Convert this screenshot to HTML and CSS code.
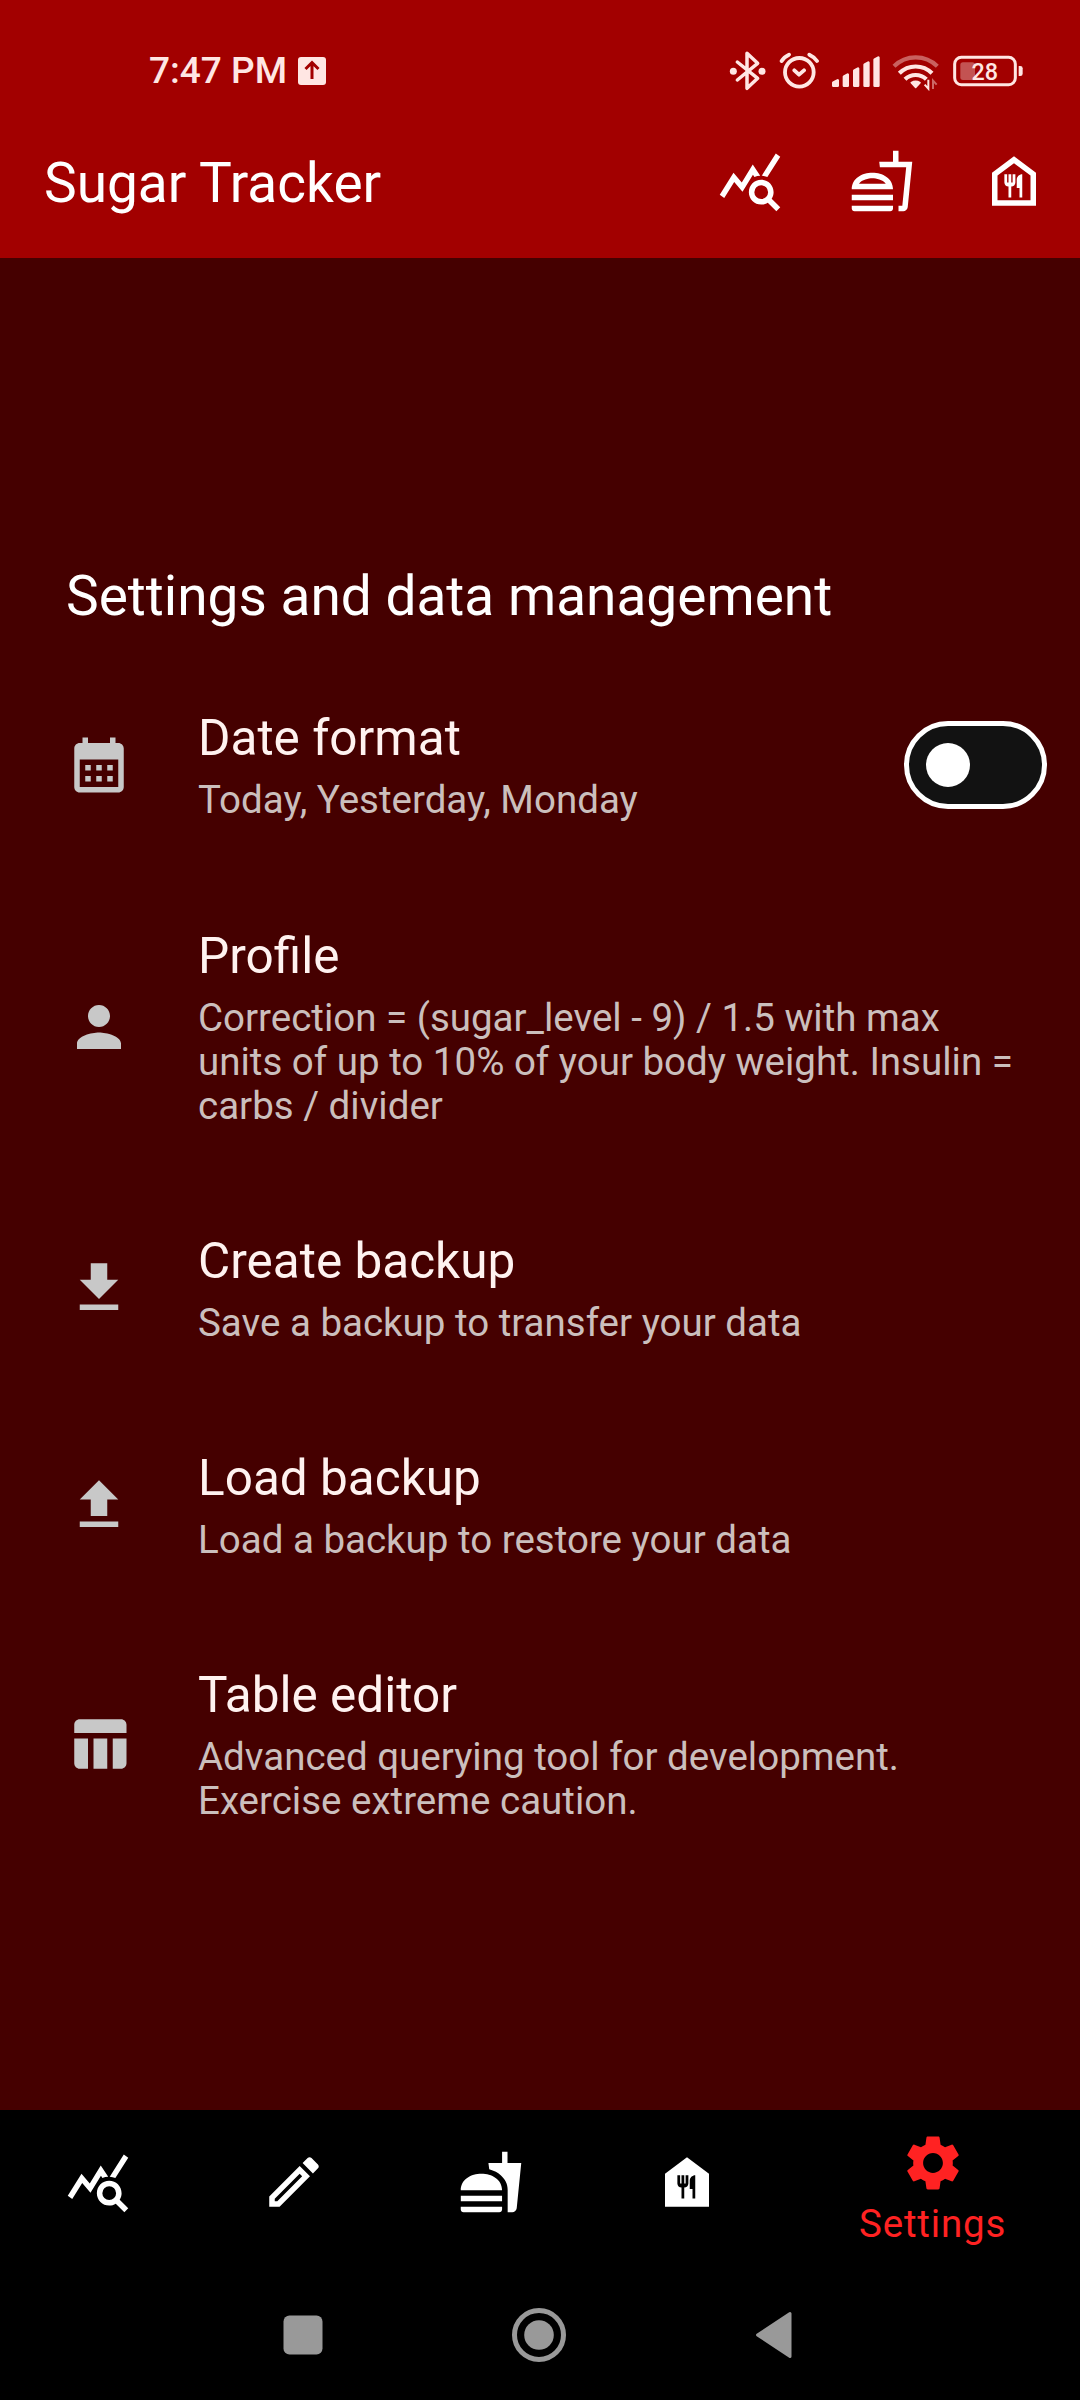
FILE: index.html
```html
<!DOCTYPE html>
<html lang="en">
<head>
<meta charset="utf-8">
<title>Sugar Tracker</title>
<link rel="stylesheet" href="styles.css">
</head>
<body>
<div class="screen">
  <header class="header">
    <div class="status">
      <span class="time">7:47 PM</span>
      <svg class="upload" viewBox="0 0 28 28"><rect width="28" height="28" rx="3" fill="currentColor"/><path d="M14 22V6M7.5 12 14 5.5 20.5 12" fill="none" stroke="#a20000" stroke-width="3"/></svg>
      <div class="status-icons">
        <svg width="38" height="40" viewBox="58 60 114 120"><g fill="none" stroke="currentColor" stroke-width="10.500" stroke-linejoin="round" stroke-linecap="round"><path d="M83 93 144 142 112 172V67L144 97 83 147"/></g><circle cx="71" cy="121" r="10.500" fill="currentColor"/><circle cx="157" cy="121" r="10.500" fill="currentColor"/></svg>
        <svg width="40" height="40" viewBox="208 60 120 120"><g fill="none" stroke="currentColor" stroke-width="11.500" stroke-linecap="round" stroke-linejoin="round"><circle cx="269" cy="124" r="43"/><path d="M254 118 268 131 283 118M216 90Q223 78 238 71M299 71Q314 78 322 90"/></g></svg>
        <svg width="49" height="40" viewBox="364 60 147 120"><g fill="currentColor" stroke="currentColor" stroke-width="8" stroke-linejoin="round"><path d="M371 155 384 148V164H371zM403 137 414 131V164H403zM434 119 445 113V164H434zM465 101 476 95V164H465zM495 86 506 80V164H495z"/></g></svg>
        <svg width="48" height="40" viewBox="547 60 144 120"><g fill="none" stroke="currentColor" stroke-width="12.500"><path d="M553 106A92 92 0 0 1 683 106" opacity=".42"/><path d="M569 127A69 69 0 0 1 667 127M586 145A46 46 0 0 1 650 145"/></g><path d="M605 155Q618 147 631 155L618 169z" fill="currentColor" stroke="currentColor" stroke-width="5" stroke-linejoin="round"/><path d="M656 146V173L645 161" fill="none" stroke="currentColor" stroke-width="6"/><path d="M670 174V149L681 161" fill="none" stroke="currentColor" stroke-width="6" opacity=".45"/></svg>
        <svg width="72" height="40" viewBox="727 60 216 120"><rect x="735" y="79" width="182" height="82" rx="20" fill="none" stroke="currentColor" stroke-width="9"/><rect x="752" y="94" width="44" height="53" rx="8" fill="currentColor" opacity=".36"/><path d="M927 105h5q7 0 7 7v16q0 7-7 7h-5z" fill="currentColor"/><text class="charge" x="825" y="147" text-anchor="middle">28</text></svg>
      </div>
    </div>
    <div class="appbar">
      <h1>Sugar Tracker</h1>
      <div class="actions">
        <svg class="icon" viewBox="0 0 24 24"><use href="#stats"/></svg>
        <svg class="icon" viewBox="0 0 24 24"><path d="M1 21.98c0 .56.45 1.01 1.010 1.010H15c.56 0 1.010-.45 1.010-1.010V21H1v.98zM8.500 8.990C4.750 8.990 1 11 1 15h15c0-4.010-3.750-6.010-7.500-6.010zM3.620 13c1.110-1.550 3.470-2.010 4.880-2.010s3.770.46 4.880 2.010H3.620zM1 17h15v2H1zM18 5V1h-2v4h-5l.23 2h9.560l-1.400 14H18v2h1.720c.84 0 1.530-.65 1.630-1.470L23 5h-5z"/></svg>
        <svg class="icon" viewBox="0 0 24 24"><path d="M12 5.500l6 4.500v9H6v-9l6-4.500M12 3L4 9v12h16V9l-8-6zm-.5 6.500v3H11v-3h-1v3h-.5v-3h-1v3c0 .83.67 1.500 1.500 1.500v4h1v-4c.83 0 1.500-.67 1.500-1.500v-3h-1zm1.500 2v3h1V18h1V9.500c-1.100 0-2 .9-2 2z"/></svg>
      </div>
    </div>
  </header>

  <main class="content">
    <h2>Settings and data management</h2>
    <section class="row">
      <svg class="icon" viewBox="0 0 24 24"><path d="M19 4h-1V2h-2v2H8V2H6v2H5c-1.110 0-1.990.9-1.990 2L3 20c0 1.100.89 2 2 2h14c1.100 0 2-.9 2-2V6c0-1.100-.9-2-2-2zm0 16H5V10h14v10zM9 14H7v-2h2v2zm4 0h-2v-2h2v2zm4 0h-2v-2h2v2zm-8 4H7v-2h2v2zm4 0h-2v-2h2v2zm4 0h-2v-2h2v2z"/></svg>
      <div class="text"><h3>Date format</h3><p>Today, Yesterday, Monday</p></div>
      <div class="switch"><div class="knob"></div></div>
    </section>
    <section class="row profile">
      <svg class="icon" viewBox="0 0 24 24"><path d="M12 12c2.210 0 4-1.790 4-4s-1.790-4-4-4-4 1.790-4 4 1.790 4 4 4zm0 2c-2.670 0-8 1.340-8 4v2h16v-2c0-2.660-5.330-4-8-4z"/></svg>
      <div class="text"><h3>Profile</h3><p>Correction = (sugar_level - 9) / 1.5 with max<br>units of up to 10% of your body weight. Insulin =<br>carbs / divider</p></div>
    </section>
    <section class="row">
      <svg class="icon" viewBox="0 0 24 24"><path d="M19 9h-4V3H9v6H5l7 7 7-7zM5 18v2h14v-2H5z"/></svg>
      <div class="text"><h3>Create backup</h3><p>Save a backup to transfer your data</p></div>
    </section>
    <section class="row">
      <svg class="icon" viewBox="0 0 24 24"><path d="M9 16h6v-6h4l-7-7-7 7h4zm-4 2h14v2H5z"/></svg>
      <div class="text"><h3>Load backup</h3><p>Load a backup to restore your data</p></div>
    </section>
    <section class="row">
      <svg class="icon" viewBox="0 0 24 24"><path d="M10 10.020h5V21h-5zM17 21h3c1.100 0 2-.9 2-2v-9h-5v11zm3-18H5c-1.100 0-2 .9-2 2v3h19V5c0-1.100-.9-2-2-2zM3 19c0 1.100.9 2 2 2h3V10H3v9z"/></svg>
      <div class="text"><h3>Table editor</h3><p>Advanced querying tool for development.<br>Exercise extreme caution.</p></div>
    </section>
  </main>

  <nav class="tabs">
    <div class="tab"><svg class="icon" viewBox="0 0 24 24"><path id="stats" d="M19.880 18.470c.44-.7.7-1.510.7-2.390 0-2.490-2.010-4.500-4.500-4.500s-4.500 2.010-4.500 4.500 2.010 4.500 4.490 4.500c.88 0 1.700-.26 2.390-.7L21.580 23 23 21.580l-3.120-3.110zm-3.800.11a2.500 2.500 0 0 1 0-5 2.500 2.500 0 0 1 0 5zm-.36-8.500c-.74.02-1.450.18-2.100.45l-.55-.83-3.800 6.180-3.010-3.520-3.630 5.810L1 17l5-8 3 3.500L13 6l2.720 4.080zm2.590.5c-.64-.28-1.330-.45-2.050-.49L21.380 2 23 3.180l-4.690 7.400z"/></svg></div>
    <div class="tab"><svg class="icon" viewBox="0 0 24 24"><path d="M14.060 9.020l.92.92L5.920 19H5v-.92l9.060-9.060M17.660 3c-.25 0-.51.1-.7.29l-1.830 1.830 3.750 3.750 1.830-1.830c.39-.39.39-1.020 0-1.410l-2.340-2.340c-.2-.2-.45-.29-.71-.29zm-3.600 3.190L3 17.250V21h3.750L17.810 9.940l-3.750-3.750z"/></svg></div>
    <div class="tab"><svg class="icon" viewBox="0 0 24 24"><path d="M18.060 22.990h1.660c.84 0 1.530-.64 1.630-1.460L23 5.050h-5V1h-1.970v4.050h-4.970l.3 2.340c1.710.47 3.310 1.320 4.270 2.260 1.440 1.420 2.430 2.890 2.430 5.290v8.050zM1 21.990V21h15.030v.99c0 .55-.45 1-1.010 1H2.010c-.56 0-1.010-.45-1.010-1zm15.030-7c0-8-15.030-8-15.030 0h15.030zM1.020 17h15v2h-15z"/></svg></div>
    <div class="tab"><svg class="icon" viewBox="0 0 24 24"><path d="M12 3 4 9v12h16V9l-8-6zm.5 9.500c0 .83-.67 1.500-1.500 1.500v4h-1v-4c-.83 0-1.500-.67-1.500-1.500v-3h1v3h.5v-3h1v3h.5v-3h1v3zM15 18h-1v-3.500h-1v-3c0-1.100.9-2 2-2V18z"/></svg></div>
    <div class="tab active"><svg class="icon" viewBox="0 0 24 24"><path d="M19.140 12.940c.04-.3.06-.61.06-.94 0-.32-.02-.64-.07-.94l2.030-1.580c.18-.14.23-.41.12-.61l-1.920-3.320c-.12-.22-.37-.29-.59-.22l-2.390.96c-.5-.38-1.030-.7-1.620-.94l-.36-2.540c-.04-.24-.24-.41-.48-.41h-3.840c-.24 0-.43.17-.47.41l-.36 2.540c-.59.24-1.130.57-1.620.94l-2.390-.96c-.22-.08-.47 0-.59.22L2.740 8.870c-.12.21-.08.47.12.61l2.030 1.580c-.05.3-.09.63-.09.94s.02.64.07.94l-2.030 1.580c-.18.14-.23.41-.12.61l1.920 3.320c.12.22.37.29.59.22l2.390-.96c.5.38 1.030.7 1.620.94l.36 2.540c.05.24.24.41.48.41h3.840c.24 0 .44-.17.47-.41l.36-2.540c.59-.24 1.130-.56 1.620-.94l2.390.96c.22.08.47 0 .59-.22l1.920-3.320c.12-.22.07-.47-.12-.61l-2.010-1.580zM12 15.600c-1.980 0-3.600-1.620-3.600-3.600s1.620-3.600 3.600-3.600 3.600 1.620 3.600 3.600-1.620 3.600-3.600 3.600z"/></svg><span>Settings</span></div>
  </nav>
  <footer class="sysnav">
    <svg viewBox="0 0 60 60"><rect x="10.500" y="10.500" width="39" height="39" rx="6"/></svg>
    <svg viewBox="0 0 60 60"><circle cx="30" cy="30" r="24.500" fill="none" stroke="#999" stroke-width="5"/><circle cx="30" cy="30" r="14.800"/></svg>
    <svg viewBox="0 0 60 60"><path d="M13.500 30 46 8.500V51.500z" stroke="#999" stroke-width="3" stroke-linejoin="round"/></svg>
  </footer>
</div>
</body>
</html>
```
FILE: styles.css
```css
* { box-sizing: border-box; margin: 0; padding: 0; }
body { background: #000; font-family: Roboto, sans-serif; color: #fff; }
svg { display: block; flex: none; }
h1, h2, h3 { font-weight: 400; white-space: nowrap; }
.screen { width: 1080px; height: 2400px; display: flex; flex-direction: column; overflow: hidden; }
.icon { width: 66px; height: 66px; fill: currentColor; }

.header { height: 258px; background: #a20000; }
.status { height: 104px; padding: 37px 56px 0 149px; display: flex; align-items: center; color: #ffe6e3; }
.time { font-size: 37px; font-weight: 500; line-height: 44px; }
.upload { width: 28px; height: 28px; margin-left: 11px; }
.status-icons { margin-left: auto; display: flex; gap: 12px; }
.charge { font-size: 70px; font-weight: 500; fill: currentColor; }
.appbar { height: 154px; padding: 0 33px 0 44px; display: flex; align-items: center; justify-content: space-between; }
.appbar h1 { font-size: 55px; line-height: 64px; padding-top: 4px; }
.actions { display: flex; gap: 66px; }

.content { height: 1852px; background: #450000; padding: 306px 33px 0 66px; }
.content h2 { font-size: 55px; line-height: 64px; margin-bottom: 29px; }
.row { display: flex; align-items: center; padding: 52px 0; color: #c8c8c8; }
.row.profile { padding: 52.8px 0 51.2px; }
.row .icon { margin-bottom: 1.6px; }
.text { flex: 1; margin-left: 66px; }
.row h3 { font-size: 49.5px; line-height: 58px; color: #fff2f0; }
.row p { font-size: 38.5px; line-height: 44.2px; margin-top: 11px; color: #cbbfbd; white-space: nowrap; }
.switch { width: 143px; height: 88px; margin: -13px 0 -11px; padding: 0 16.5px; border: 5.5px solid #fff; border-radius: 44px; background: #121212; display: flex; align-items: center; }
.knob { width: 44px; height: 44px; border-radius: 50%; background: #fff; }

.tabs { height: 154px; display: flex; }
.tab { width: 196.3px; display: flex; flex-direction: column; align-items: center; padding-top: 39px; }
.tab.active { width: 294.8px; padding-top: 20px; color: #ff2222; }
.tab span { font-size: 38.5px; line-height: 45px; margin-top: 5px; letter-spacing: 0.8px; }
.sysnav { height: 136px; padding: 41px 276px 0 273px; display: flex; justify-content: space-between; fill: #999; }
.sysnav svg { width: 60px; height: 60px; }
```
